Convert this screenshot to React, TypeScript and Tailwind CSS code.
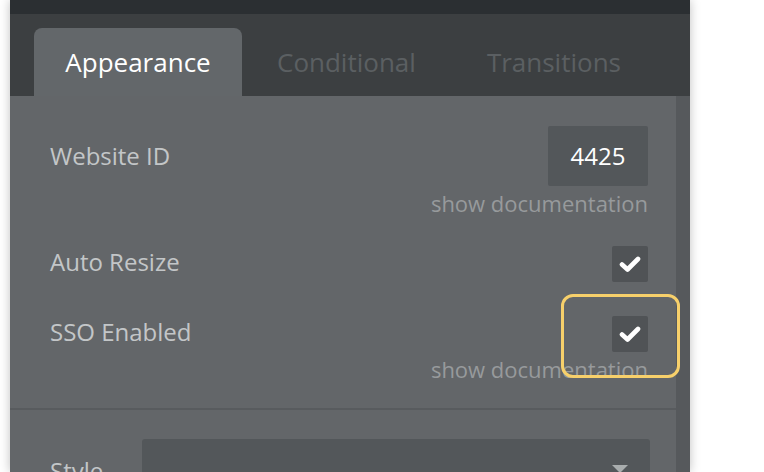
import React from "react";

function Check() {
  return (
    <svg width="22" height="18" viewBox="0 0 22 18">
      <path d="M3 9.5 L8.5 14.5 L19 4" fill="none" stroke="#ffffff" strokeWidth="4.6" strokeLinecap="round" strokeLinejoin="round" />
    </svg>
  );
}

export default function App() {
  return (
    <div className="w-[764px] h-[472px] bg-white overflow-hidden relative" style={{ fontFamily: '"Open Sans", sans-serif' }}>
      <div className="ml-[10px] w-[680px] h-[472px] flex flex-col shadow-[0_0_10px_rgba(0,0,0,0.25)]">
        <div className="h-[14px] bg-[#2b2f32] shrink-0" />
        <div className="h-[82px] bg-[#3c3f41] flex items-end pl-[24px] shrink-0">
          <div className="w-[208px] h-[68px] bg-[#63676a] rounded-t-[8px] flex items-center justify-center text-[26px] text-white">Appearance</div>
          <div className="ml-[35px] h-[68px] flex items-center text-[26px] text-[#5b5f62]">Conditional</div>
          <div className="ml-[71px] h-[68px] flex items-center text-[26px] text-[#5b5f62]">Transitions</div>
        </div>
        <div className="flex-1 flex bg-[#636669] relative">
          <div className="flex-1 flex flex-col">
            <div className="pl-[40px] pr-[28px] pt-[30px]">
              <div className="flex items-center justify-between h-[60px]">
                <div className="text-[24px] leading-[32px] text-[#c3c6c8] -mt-[1px]">Website ID</div>
                <div className="w-[100px] h-[60px] bg-[#53575a] rounded-[2px] flex items-center justify-center text-[24px] text-white">4425</div>
              </div>
              <div className="text-right text-[22px] text-[#979a9c] mt-[2px] leading-[30px]">show documentation</div>
              <div className="flex items-center justify-between mt-[28px] h-[36px]">
                <div className="text-[24px] leading-[32px] text-[#c3c6c8] -mt-[5px]">Auto Resize</div>
                <div className="w-[36px] h-[36px] bg-[#505356] rounded-[2px] flex items-center justify-center"><Check /></div>
              </div>
              <div className="flex items-center justify-between mt-[34px] h-[36px]">
                <div className="text-[24px] leading-[32px] text-[#c3c6c8] -mt-[5px]">SSO Enabled</div>
                <div className="w-[36px] h-[36px] bg-[#505356] rounded-[2px] flex items-center justify-center"><Check /></div>
              </div>
              <div className="text-right text-[22px] text-[#979a9c] mt-[2px] leading-[30px]">show documentation</div>
            </div>
            <div className="mt-[24px] h-[2px] bg-[#585b5e]" />
            <div className="pl-[40px] pr-[26px] pt-[29px] flex items-start">
              <div className="text-[24px] leading-[32px] text-[#c3c6c8] mt-[16px] w-[92px]">Style</div>
              <div className="flex-1 h-[60px] bg-[#53575a] rounded-[3px] relative">
                <div className="absolute right-[22px] top-[26px] w-0 h-0 border-l-[8px] border-r-[8px] border-t-[8px] border-l-transparent border-r-transparent border-t-[#a9adae]" />
              </div>
            </div>
          </div>
          <div className="w-[14px] bg-[#56595c]" />
        </div>
      </div>
      <div className="absolute left-[561px] top-[294px] w-[119px] h-[84px] border-[3px] border-[#f7d06b] rounded-[12px]" />
    </div>
  );
}
